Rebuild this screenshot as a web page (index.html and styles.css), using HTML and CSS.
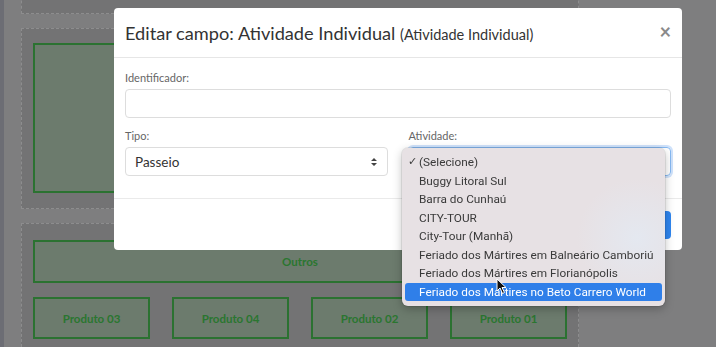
FILE: index.html
```html
<!DOCTYPE html>
<html lang="pt-BR">
<head>
  <meta charset="UTF-8">
  <title>Editar campo</title>
  <link rel="stylesheet" href="styles.css">
</head>
<body>
  <!-- mapa de campos (atrás do modal) -->
  <div class="page">
    <div class="zone zone-top"></div>

    <div class="zone zone-main">
      <div class="field field-big"></div>
    </div>

    <div class="zone zone-products">
      <div class="field field-wide">Outros</div>
      <div class="product-row">
        <div class="field">Produto 03</div>
        <div class="field">Produto 04</div>
        <div class="field">Produto 02</div>
        <div class="field">Produto 01</div>
      </div>
    </div>
  </div>

  <!-- modal -->
  <div class="modal">
    <div class="modal-header">
      <h2 class="modal-title">Editar campo: Atividade Individual <small>(Atividade Individual)</small></h2>
      <span class="close">&times;</span>
    </div>

    <div class="modal-body">
      <label class="lbl">Identificador:</label>
      <div class="input"></div>

      <div class="cols">
        <div>
          <label class="lbl">Tipo:</label>
          <div class="select">
            <span>Passeio</span>
            <svg width="8" height="10" viewBox="0 0 8 10"><path d="M1 4 L4 1 L7 4 Z M1 6 L4 9 L7 6 Z" fill="#444"/></svg>
          </div>
        </div>
        <div>
          <label class="lbl">Atividade:</label>
          <div class="select focus"></div>
        </div>
      </div>
    </div>

    <div class="modal-footer">
      <div class="btn-primary"></div>
    </div>
  </div>

  <!-- lista aberta do select Atividade -->
  <ul class="dropdown">
    <li><span class="check">✓</span>(Selecione)</li>
    <li>Buggy Litoral Sul</li>
    <li>Barra do Cunhaú</li>
    <li>CITY-TOUR</li>
    <li>City-Tour (Manhã)</li>
    <li>Feriado dos Mártires em Balneário Camboriú</li>
    <li>Feriado dos Mártires em Florianópolis</li>
    <li class="active">Feriado dos Mártires no Beto Carrero World</li>
  </ul>

  <svg class="cursor" width="12" height="17" viewBox="0 0 12 17">
    <path d="M1 1 L1 13 L4 10 L6.5 15.5 L8.5 14.5 L6 9.5 L10 9.5 Z" fill="#111" stroke="#fff" stroke-width="1"/>
  </svg>
</body>
</html>
```

FILE: styles.css
```css
body {
  margin: 0;
  height: 347px;
  overflow: hidden;
  background: #7e7e7f;
  border-left: 4px solid #6c6d74;
  font-family: Lato, "Liberation Sans", sans-serif;
}

.page {
  display: flex;
  flex-direction: column;
  gap: 14px;
  padding-left: 17px;
  width: 558px;
}

.zone {
  background: #737374;
  border: 1px dashed #8d8d8e;
  box-sizing: border-box;
  padding: 14px 11px 0;
}

.zone-top {
  height: 40px;
  margin-top: -26px;
}

.zone-main {
  height: 181px;
}

.zone-products {
  height: 124px;
  border-bottom: none;
  padding-top: 16px;
  display: flex;
  flex-direction: column;
  gap: 14px;
}

.field {
  background: #6c7b6d;
  border: 2px solid #2b7231;
  box-sizing: border-box;
  color: #2a7630;
  font-size: 11.5px;
  font-weight: bold;
  display: flex;
  align-items: center;
  justify-content: center;
}

.field-big {
  height: 150px;
}

.field-wide {
  height: 43px;
}

.product-row {
  display: grid;
  grid-template-columns: repeat(4, 1fr);
  gap: 22px;
}

.product-row .field {
  height: 42px;
}

/* modal */
.modal {
  position: fixed;
  left: 114px;
  top: 8px;
  width: 568px;
  height: 242px;
  background: #fff;
  border-radius: 4px;
  box-sizing: border-box;
  color: #333;
}

.modal-header {
  height: 49px;
  border-bottom: 1px solid #e6e6e6;
  display: flex;
  align-items: center;
  justify-content: space-between;
  padding: 0 11px;
}

.modal-title {
  margin: 0;
  font-size: 18.2px;
  font-weight: normal;
  color: #333;
}

.modal-title small {
  font-size: 14.5px;
}

.close {
  font-size: 20px;
  font-weight: bold;
  color: #8a8a8a;
  margin-top: -4px;
}

.modal-body {
  padding: 13px 11px 0;
  height: 127px;
  border-bottom: 1px solid #eaeaea;
}

.lbl {
  display: block;
  font-size: 11px;
  color: #666;
  line-height: 14px;
  margin-bottom: 4px;
}

.input,
.select {
  height: 29px;
  border: 1px solid #ddd;
  border-radius: 4px;
  box-sizing: border-box;
}

.input {
  margin-bottom: 11px;
}

.cols {
  display: grid;
  grid-template-columns: 1fr 1fr;
  gap: 21px;
}

.select {
  display: flex;
  align-items: center;
  justify-content: space-between;
  padding: 0 9px;
  font-size: 13.5px;
  color: #333;
}

.select.focus {
  border-color: #86b9f2;
  box-shadow: 0 0 0 2px #cfe2fb;
}

.modal-footer {
  display: flex;
  justify-content: flex-end;
  padding: 12px 11px;
}

.btn-primary {
  width: 60px;
  height: 28px;
  background: #2f86f0;
  border-radius: 4px;
}

/* dropdown do sistema */
.dropdown {
  position: fixed;
  left: 402px;
  top: 148px;
  width: 263px;
  margin: 0;
  padding: 5px 3px;
  list-style: none;
  box-sizing: border-box;
  background: radial-gradient(circle at 235px 90px, #e4e8f0 0, #e7e1e4 60px), #e7e1e4;
  border-radius: 6px;
  box-shadow: 0 3px 10px rgba(0,0,0,0.25), 0 0 0 1px rgba(0,0,0,0.08);
  font-family: Roboto, "Liberation Sans", sans-serif;
  font-size: 11.8px;
  color: #3a3a3a;
}

.dropdown li {
  position: relative;
  height: 18.5px;
  line-height: 18.5px;
  padding-left: 14px;
  border-radius: 3px;
  white-space: nowrap;
}

.dropdown .check {
  position: absolute;
  left: 3px;
  font-size: 11px;
}

.dropdown li.active {
  background: #2f7fe9;
  color: #fff;
}

.cursor {
  position: fixed;
  left: 496px;
  top: 278px;
}
```
